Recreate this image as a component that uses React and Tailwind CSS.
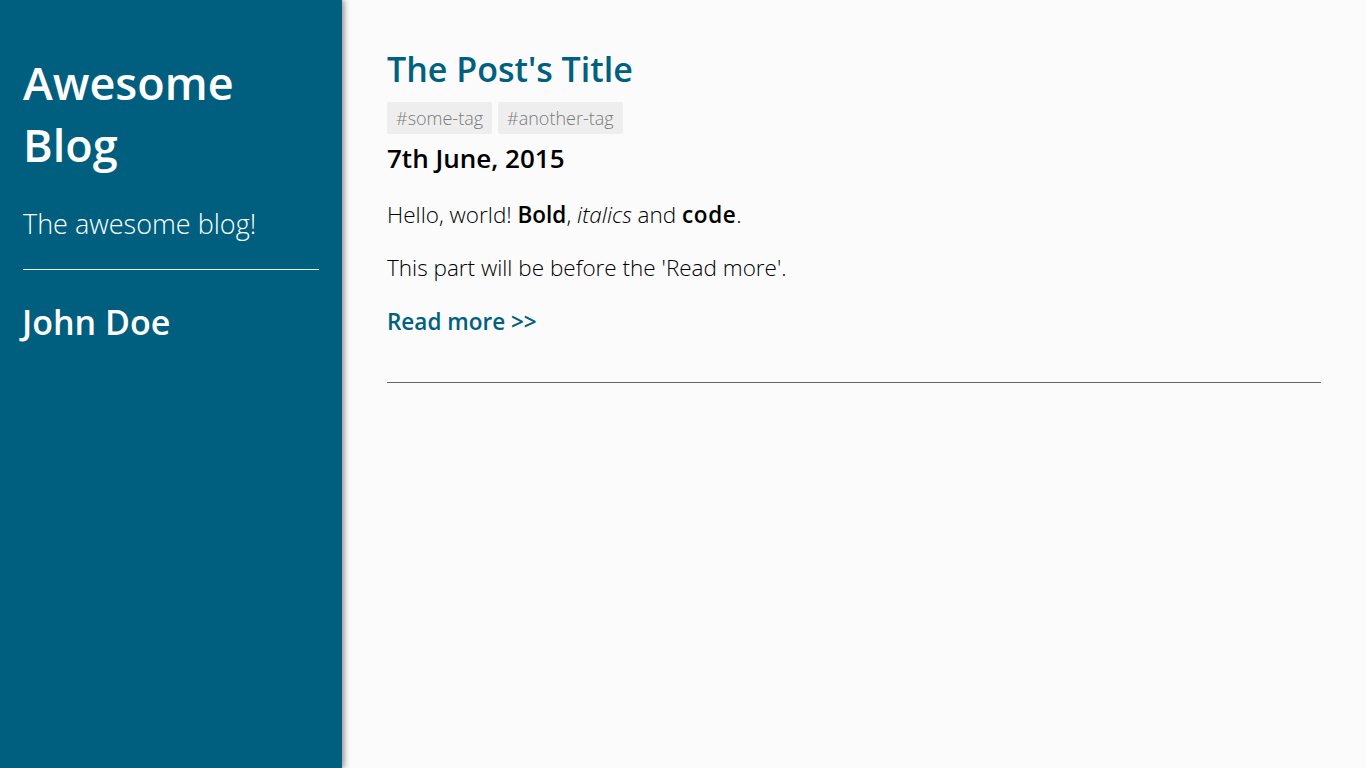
import React from 'react';

const Sidebar = () => (
    <aside className="relative z-10 w-[342px] shrink-0 bg-[#005f7f] text-white px-[23px] pt-[52px] shadow-[2px_0_6px_rgba(0,0,0,0.45)]">
        <h1 className="text-[45px] leading-[62px] font-semibold">Awesome Blog</h1>
        <p className="mt-[30px] text-[27px] leading-[36px] font-light">The awesome blog!</p>
        <hr className="mt-[27px] border-0 border-t border-[#e8f0f3]" />
        <h2 className="mt-[29px] -ml-[1px] text-[34px] leading-[46px] font-semibold">John Doe</h2>
    </aside>
);

const Post = () => (
    <article>
        <h1 className="text-[34px] leading-[46px] font-semibold text-[#006080]">The Post's Title</h1>
        <div className="mt-[10px] flex gap-[6px]">
            <span className="px-[9px] h-[32px] flex items-center rounded-[2px] bg-[#eeeeee] text-[#7a7a7a] text-[18px] font-light">#some-tag</span>
            <span className="px-[9px] h-[32px] flex items-center rounded-[2px] bg-[#eeeeee] text-[#7a7a7a] text-[18px] font-light">#another-tag</span>
        </div>
        <h3 className="mt-[5px] text-[26px] leading-[38px] font-semibold text-black">7th June, 2015</h3>
        <p className="mt-[22px] text-[22.5px] leading-[32px] font-light text-black">
            Hello, world! <strong className="font-semibold">Bold</strong>, <em className="italic">italics</em> and{' '}
            <code className="font-semibold tracking-[0.6px] font-['Open_Sans',sans-serif]">code</code>.
        </p>
        <p className="mt-[21px] text-[22.5px] leading-[32px] font-light text-black">This part will be before the 'Read more'.</p>
        <a href="#" className="block mt-[22px] text-[22.5px] leading-[32px] font-semibold text-[#006080]">Read more &gt;&gt;</a>
        <hr className="mt-[44px] border-0 border-t border-[#666666]" />
    </article>
);

const App = () => {
    return (
        <div className="min-h-screen flex bg-[#fbfbfb] font-['Open_Sans',sans-serif]">
            <Sidebar />
            <main className="flex-1 px-[45px] pt-[46px]">
                <Post />
            </main>
        </div>
    );
};

export default App;
